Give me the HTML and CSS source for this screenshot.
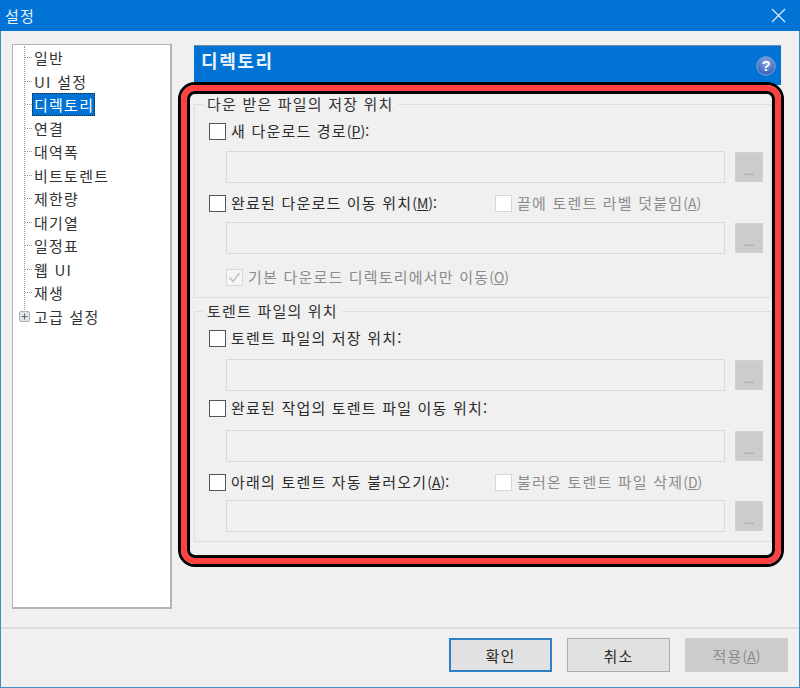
FILE: index.html
```html
<!DOCTYPE html>
<html lang="ko">
<head>
<meta charset="utf-8">
<title>설정</title>
<link rel="stylesheet" href="styles.css">
</head>
<body>
<div class="window">
  <header class="titlebar">
    <span class="title">설정</span>
    <svg class="close" width="15" height="15" viewBox="0 0 15 15"><path d="M1 1L14 14M14 1L1 14" stroke="#e4f1fb" stroke-width="1.1" fill="none"/></svg>
  </header>
  <main class="main">
    <nav class="tree">
      <ul class="tree-list">
        <li class="node"><span class="twig"></span><span class="node-text">일반</span></li>
        <li class="node"><span class="twig"></span><span class="node-text">UI 설정</span></li>
        <li class="node"><span class="twig"></span><span class="node-text selected">디렉토리</span></li>
        <li class="node"><span class="twig"></span><span class="node-text">연결</span></li>
        <li class="node"><span class="twig"></span><span class="node-text">대역폭</span></li>
        <li class="node"><span class="twig"></span><span class="node-text">비트토렌트</span></li>
        <li class="node"><span class="twig"></span><span class="node-text">제한량</span></li>
        <li class="node"><span class="twig"></span><span class="node-text">대기열</span></li>
        <li class="node"><span class="twig"></span><span class="node-text">일정표</span></li>
        <li class="node"><span class="twig"></span><span class="node-text">웹 UI</span></li>
        <li class="node"><span class="twig"></span><span class="node-text">재생</span></li>
        <li class="node node-last">
          <svg class="plus" width="11" height="11" viewBox="0 0 11 11"><rect x="0.5" y="0.5" width="10" height="10" rx="1.5" fill="#dfe3ea" stroke="#aab0ba"/><path d="M2.5 5.5H8.5M5.5 2.5V8.5" stroke="#5f6672" fill="none"/></svg>
          <span class="node-text">고급 설정</span>
        </li>
      </ul>
    </nav>
    <section class="panel">
      <div class="panel-head">
        <h1 class="panel-title">디렉토리</h1>
        <svg class="help" width="20" height="20" viewBox="0 0 20 20">
          <defs><radialGradient id="helpfill" cx="50%" cy="30%" r="75%"><stop offset="0" stop-color="#8aa6e8"/><stop offset="1" stop-color="#2f56b4"/></radialGradient></defs>
          <circle cx="10" cy="10" r="9.2" fill="url(#helpfill)" stroke="#9bb4dc" stroke-width="0.8"/>
          <text x="10" y="15.2" class="help-mark">?</text>
        </svg>
      </div>

      <fieldset class="group">
        <legend class="legend">다운 받은 파일의 저장 위치</legend>
        <div class="row row-a"><label class="check"><span class="box"></span>새 다운로드 경로<span class="key">(<u>P</u>):</span></label></div>
        <div class="path path-a"><span class="field"></span><span class="browse">...</span></div>
        <div class="row row-b">
          <label class="check check-wide"><span class="box"></span>완료된 다운로드 이동 위치<span class="key">(<u>M</u>):</span></label>
          <label class="check off"><span class="box"></span>끝에 토렌트 라벨 덧붙임<span class="key">(<u>A</u>)</span></label>
        </div>
        <div class="path path-b"><span class="field"></span><span class="browse">...</span></div>
        <div class="row row-c"><label class="check off"><span class="box"><svg width="15" height="15" viewBox="0 0 15 15"><path d="M2.5 7.5L6 11.5L12.5 3" stroke="#c2c2c2" stroke-width="1.6" fill="none"/></svg></span>기본 다운로드 디렉토리에서만 이동<span class="key">(<u>O</u>)</span></label></div>
      </fieldset>

      <fieldset class="group group-two">
        <legend class="legend">토렌트 파일의 위치</legend>
        <div class="row row-a"><label class="check"><span class="box"></span>토렌트 파일의 저장 위치:</label></div>
        <div class="path path-c"><span class="field"></span><span class="browse">...</span></div>
        <div class="row row-d"><label class="check"><span class="box"></span>완료된 작업의 토렌트 파일 이동 위치:</label></div>
        <div class="path path-d"><span class="field"></span><span class="browse">...</span></div>
        <div class="row row-e">
          <label class="check check-wide"><span class="box"></span>아래의 토렌트 자동 불러오기<span class="key">(<u>A</u>):</span></label>
          <label class="check off"><span class="box"></span>불러온 토렌트 파일 삭제<span class="key">(<u>D</u>)</span></label>
        </div>
        <div class="path path-e"><span class="field"></span><span class="browse">...</span></div>
      </fieldset>
    </section>
  </main>
  <footer class="footer">
    <button class="btn btn-default" type="button">확인</button>
    <button class="btn" type="button">취소</button>
    <button class="btn btn-off" type="button" disabled>적용<span class="key">(<u>A</u>)</span></button>
  </footer>
  <div class="callout"></div>
</div>
</body>
</html>
```
FILE: styles.css
```css
* { box-sizing: border-box; }
html, body { margin: 0; padding: 0; }
body {
  width: 800px;
  height: 688px;
  overflow: hidden;
  font-family: "Noto Sans CJK KR", "Noto Sans", sans-serif;
  font-size: 15px;
  color: #2b2b2b;
  background: #f0f0f0;
}
.window {
  position: relative;
  display: flex;
  flex-direction: column;
  width: 800px;
  height: 688px;
  border: 1px solid #3d8fc9;
  border-top: 0;
  background: #f0f0f0;
}
.titlebar {
  display: flex;
  align-items: center;
  justify-content: space-between;
  flex: none;
  height: 31px;
  margin: 0 -1px;
  padding: 0 14px 0 5px;
  background: #0173d4;
  color: #e8f2fb;
}
.title { font-size: 15px; letter-spacing: 1.2px; line-height: 1; }
.close { display: block; }

.main { display: flex; flex: 1; min-height: 0; padding: 13px 0 0 11px; gap: 22px; }

.tree {
  flex: none;
  width: 160px;
  height: 565px;
  padding: 1px 0 0 11px;
  background: #fff;
  border: 1px solid #b4b4b4;
  border-right-width: 2px;
  border-bottom-width: 2px;
}
.tree-list {
  margin: 0;
  padding: 0;
  list-style: none;
  height: 270px;
  border-left: 1px dotted #9a9a9a;
}
.node { display: flex; align-items: center; height: 23.5px; white-space: nowrap; }
.twig { flex: none; width: 7px; border-top: 1px dotted #9a9a9a; }
.node-text { padding: 0 1px 0 2px; line-height: 23px; letter-spacing: 1.25px; color: #333; }
.selected {
  background: #0173d4;
  color: #fff;
  outline: 1px dotted #222;
  outline-offset: -1px;
}
.node-last { height: 23.5px; }
.plus { flex: none; margin: 0 2px 0 -6px; }

.panel { flex: none; width: 587px; padding-top: 1px; }
.panel-head {
  display: flex;
  align-items: flex-start;
  justify-content: space-between;
  height: 40px;
  padding: 2px 5px 0 7px;
  background: #0173d4;
  border-top: 1px solid #6d8fae;
}
.panel-title { margin: 0; font-size: 18px; font-weight: 700; letter-spacing: 1.6px; line-height: 24px; color: #eaf3fb; }
.help { display: block; margin-top: 8px; }
.help-mark { font-family: "Liberation Sans", sans-serif; font-size: 15px; font-weight: 700; fill: #fff; text-anchor: middle; }

.group {
  margin: 9px 0 0;
  padding: 0 0 11px 14px;
  width: 578px;
  min-width: 0;
  border: 1px solid #dedede;
  min-inline-size: 0;
}
.group-two { margin-top: 3px; padding-bottom: 9px; }
.legend { margin-left: -6px; padding: 0 4px; height: 20px; line-height: 20px; letter-spacing: 1.2px; color: #333; }

.row { display: flex; align-items: center; height: 18px; white-space: nowrap; }
.row-a { margin-top: 8px; }
.row-b { margin-top: 11px; }
.row-c { margin: 14px 0 0 17px; }
.row-d { margin-top: 8px; }
.row-e { margin-top: 11px; }
.check { display: flex; align-items: center; letter-spacing: 1.2px; line-height: 18px; }
.check-wide { width: 286px; }
.box {
  display: flex;
  align-items: center;
  justify-content: center;
  flex: none;
  width: 17px;
  height: 17px;
  margin-right: 5px;
  background: #fff;
  border: 1px solid #555;
}
.off { color: #8c8c8c; }
.off .box { border-color: #d8d8d8; }
.row-c .box { background: #f6f6f6; }
.key { letter-spacing: 0; font-size: 14px; }

.path { display: flex; align-items: center; height: 32px; margin-left: 17px; gap: 10px; }
.path-a { margin-top: 11px; }
.path-b { margin-top: 10px; }
.path-c { margin-top: 12px; }
.path-d { margin-top: 13px; }
.path-e { margin-top: 9px; }
.field { display: block; width: 499px; height: 32px; background: #f0f0f0; border: 1px solid #d9d9d9; }
.browse {
  display: flex;
  align-items: flex-end;
  justify-content: center;
  width: 28px;
  height: 30px;
  padding-bottom: 5px;
  background: #cccccc;
  border: 1px solid #d2d2d2;
  color: #8f8f8f;
  font-size: 11px;
  line-height: 11px;
}

.footer {
  display: flex;
  flex: none;
  gap: 15px;
  height: 60px;
  padding: 9px 0 0 448px;
  border-top: 2px solid #dcdcdc;
}
.btn {
  width: 103px;
  height: 34px;
  padding: 0;
  font: inherit;
  letter-spacing: 1.1px;
  color: #2b2b2b;
  background: #e1e1e1;
  border: 1px solid #adadad;
}
.btn-default { border: 2px solid #2f80c4; }
.btn-off { background: #cccccc; border-color: #cfcfcf; color: #8c8c8c; }

.callout {
  position: absolute;
  left: 177px;
  top: 82px;
  width: 606px;
  height: 485px;
  border: 3px solid #000;
  border-radius: 17px;
  pointer-events: none;
}
.callout::before {
  content: "";
  position: absolute;
  inset: 0;
  border: 6px solid #ff4040;
  border-radius: 14px;
}
.callout::after {
  content: "";
  position: absolute;
  inset: 6px;
  border: 3px solid #000;
  border-radius: 8px;
}
```
